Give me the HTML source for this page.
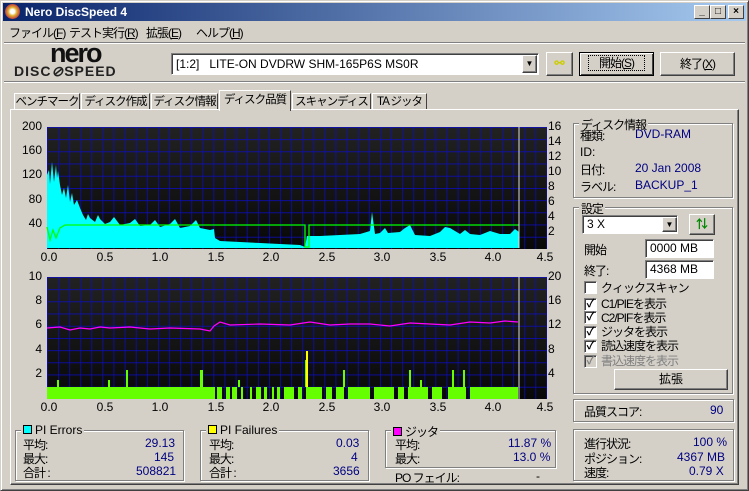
<!DOCTYPE html>
<html><head><meta charset="utf-8"><style>
*{box-sizing:border-box;margin:0;padding:0}
body{width:749px;height:491px;background:#d4d0c8;font-family:"Liberation Sans","Noto Sans CJK JP",sans-serif;font-size:12px;color:#000;position:relative;overflow:hidden}
.a{position:absolute;white-space:nowrap}
.n{letter-spacing:-1px}
.win{position:absolute;left:0;top:0;width:749px;height:491px;border:1px solid;border-color:#d4d0c8 #404040 #404040 #d4d0c8;box-shadow:inset 1px 1px #fff,inset -1px -1px #808080}
.title{position:absolute;left:3px;top:3px;width:743px;height:18px;background:linear-gradient(90deg,#0a246a,#a6caf0);color:#fff;font-weight:bold;font-size:12px;line-height:18px;padding-left:22px}
.tb{position:absolute;top:5px;width:16px;height:14px;background:#d4d0c8;border:1px solid;border-color:#fff #404040 #404040 #fff;font-size:10px;line-height:11px;text-align:center;color:#000;font-weight:bold}
.grp{position:absolute;border:1px solid #808080;box-shadow:1px 1px #fff, inset 1px 1px #fff}
.gl{position:absolute;top:-8px;left:6px;background:#d4d0c8;padding:0 2px;letter-spacing:-1px}
.v{color:#000080}
.btn{position:absolute;background:#d4d0c8;border:1px solid;border-color:#fff #404040 #404040 #fff;box-shadow:inset -1px -1px #808080;text-align:center}
.edit{position:absolute;background:#fff;border:1px solid;border-color:#808080 #fff #fff #808080;box-shadow:inset 1px 1px #404040;padding-left:4px;line-height:16px}
.cb{position:absolute;width:13px;height:13px;background:#fff;border:1px solid;border-color:#808080 #fff #fff #808080;box-shadow:inset 1px 1px #404040;font-size:11px;line-height:11px;text-align:center;font-weight:bold}
.tab{position:absolute;top:93px;height:17px;border:1px solid;border-color:#fff #404040 transparent #fff;border-bottom:none;line-height:16px;text-align:center;font-size:11.5px;letter-spacing:-1px;overflow:hidden}
</style></head><body>
<div class="win"></div>
<div class="title">Nero DiscSpeed 4</div>
<div class="a" style="left:5px;top:4px;width:15px;height:15px;border-radius:50%;background:radial-gradient(circle,#fff 20%,#e0b030 40%,#c04040 70%,#6080c0)"></div>
<div class="tb" style="left:694px">_</div><div class="tb" style="left:710px">□</div><div class="tb" style="left:728px">×</div>
<div class="a n" style="left:9px;top:24px">ファイル(<u>F</u>)</div>
<div class="a n" style="left:69px;top:24px">テスト実行(<u>R</u>)</div>
<div class="a n" style="left:146px;top:24px">拡張(<u>E</u>)</div>
<div class="a n" style="left:196px;top:24px">ヘルプ(<u>H</u>)</div>
<div class="a" style="left:4px;top:42px;width:741px;border-top:1px solid #808080;border-bottom:1px solid #fff"></div>
<div class="a" style="left:4px;top:81px;width:741px;border-top:1px solid #808080;border-bottom:1px solid #fff"></div>
<div class="a" style="left:50px;top:38px;font:bold 27px 'Liberation Sans',sans-serif;letter-spacing:-2px;color:#111">nero</div>
<div class="a" style="left:14px;top:63px;font:bold 14px 'Liberation Sans',sans-serif;letter-spacing:1px;color:#222">DISC<span style="font-style:italic">⊘</span>SPEED</div>
<div class="edit" style="left:171px;top:53px;width:368px;height:22px;line-height:20px">[1:2]&nbsp;&nbsp; LITE-ON DVDRW SHM-165P6S MS0R</div>
<div class="btn" style="left:522px;top:55px;width:15px;height:18px;font-size:8px;line-height:16px">▼</div>
<div class="btn" style="left:546px;top:52px;width:27px;height:24px;color:#cc0;font-weight:bold;line-height:20px">⚯</div>
<div class="btn n" style="left:579px;top:52px;width:75px;height:24px;line-height:20px;border:1px solid #000;box-shadow:inset 1px 1px #fff,inset -1px -1px #404040"><span style="outline:1px dotted #000;padding:0 10px">開始(<u>S</u>)</span></div>
<div class="btn n" style="left:660px;top:52px;width:75px;height:24px;line-height:22px">終了(<u>X</u>)</div>
<!-- tabs -->
<div class="tab" style="left:14px;width:66px">ベンチマーク</div>
<div class="tab" style="left:81px;width:69px">ディスク作成</div>
<div class="tab" style="left:151px;width:67px">ディスク情報</div>
<div class="tab" style="left:219px;top:90px;width:72px;height:21px;background:#d4d0c8;z-index:2;line-height:19px">ディスク品質</div>
<div class="tab" style="left:292px;width:79px">スキャンディスク</div>
<div class="tab" style="left:372px;width:55px">TA ジッタ</div>
<div class="a" style="left:10px;top:109px;width:729px;height:376px;border:1px solid;border-color:#fff #404040 #404040 #fff;box-shadow:inset -1px -1px #808080"></div>
<!-- charts -->
<svg class="a" style="left:0;top:115px" width="570" height="305" viewBox="0 115 570 305" font-family="Liberation Sans,sans-serif" font-size="12">
<defs><linearGradient id="bg" x1="0" y1="0" x2="0" y2="1"><stop offset="0" stop-color="#222"/><stop offset="1" stop-color="#080808"/></linearGradient>
<pattern id="gr" x="47" y="127" width="11.1" height="12.2" patternUnits="userSpaceOnUse"><path d="M0 0V12.2M0 0H11.1" stroke="#0c0cc8" stroke-width="1.4" fill="none"/></pattern>
<pattern id="gr2" x="47" y="277" width="11.1" height="12.2" patternUnits="userSpaceOnUse"><path d="M0 0V12.2M0 0H11.1" stroke="#0c0cc8" stroke-width="1.4" fill="none"/></pattern></defs>
<rect x="47" y="127" width="500" height="122" fill="url(#bg)"/><rect x="47" y="127" width="500" height="122" fill="url(#gr)"/>
<rect x="47" y="277" width="500" height="122" fill="url(#bg)"/><rect x="47" y="277" width="500" height="122" fill="url(#gr2)"/>
<path fill="#00ffff" d="M47 248V175L49 170 50 184 52 162 54 182 56 165 57 178 58 171 60 185 62 195 64 188 66 198 68 185 70 202 72 193 74 205 77 200 80 208 83 215 86 220 88 214 90 218 95 222 98 215 100 219 105 224 110 222 114 217 120 225 130 223 135 219 140 226 150 225 155 220 160 227 170 224 175 219 180 228 190 226 196 220 200 228 210 230 214 229 215 238 220 241 240 242 260 243 280 244 300 245 305 247 307 236 320 236 340 235 360 234 370 231 372 212 375 234 380 233 385 228 388 233 400 232 405 228 410 225 415 235 430 236 440 232 445 227 450 228 460 234 465 230 470 234 480 235 490 231 500 234 510 234 515 229 519 232V248Z"/>
<path fill="none" stroke="#00ff00" stroke-width="1.3" d="M47 227L50 240 53 230 56 238 60 228 65 225H305V247H309V225H519"/>
<line x1="519" y1="127" x2="519" y2="248" stroke="#ddd"/>
<path fill="none" stroke="#ff00ff" stroke-width="1.2" d="M47 328L60 327 70 330 80 328 90 329 100 327 110 328 130 327 150 329 170 328 200 329 210 331 214 326 220 322 230 325 260 324 290 325 310 322 330 325 350 324 370 324 390 326 410 323 430 324 450 325 470 322 490 323 505 321 518 322"/>
<path fill="#66ff00" d="M47 387h168v12H47zM217 387h5v12h-5zM226 387h4v12h-4zM232 387h5v12h-5zM241 387h2v12h-2zM250 387h2v12h-2zM256 387h5v12h-5zM264 387h3v12h-3zM272 387h2v12h-2zM277 387h3v12h-3zM284 387h10v12h-10zM298 387h4v12h-4zM306 387h16v12h-16zM326 387h6v12h-6zM336 387h8v12h-8zM348 387h22v12h-22zM374 387h20v12h-20zM398 387h6v12h-6zM408 387h20v12h-20zM432 387h10v12h-10zM448 387h18v12h-18zM470 387h48v12h-48zM57 380h2v7h-2zM108 380h2v7h-2zM126 370h2v17h-2zM200 370h3v17h-3zM238 380h2v7h-2zM305 360h3v27h-3zM343 370h2v17h-2zM409 370h2v17h-2zM452 370h2v17h-2zM463 370h2v17h-2zM420 380h2v7h-2z"/>
<path fill="#ffff00" d="M306 351h2v36h-2z"/>
<line x1="519" y1="277" x2="519" y2="399" stroke="#ddd"/>
<g text-anchor="end" fill="#000"><text x="42" y="130">200</text><text x="42" y="154">160</text><text x="42" y="178">120</text><text x="42" y="203">80</text><text x="42" y="227">40</text>
<text x="42" y="280">10</text><text x="42" y="304">8</text><text x="42" y="328">6</text><text x="42" y="353">4</text><text x="42" y="377">2</text></g>
<g fill="#000"><text x="548" y="130">16</text><text x="548" y="145">14</text><text x="548" y="160">12</text><text x="548" y="175">10</text><text x="548" y="190">8</text><text x="548" y="205">6</text><text x="548" y="220">4</text><text x="548" y="235">2</text>
<text x="548" y="280">20</text><text x="548" y="304">16</text><text x="548" y="328">12</text><text x="548" y="353">8</text><text x="548" y="377">4</text></g>
<g text-anchor="middle" fill="#000"><text x="49" y="261">0.0</text><text x="105" y="261">0.5</text><text x="160" y="261">1.0</text><text x="216" y="261">1.5</text><text x="271" y="261">2.0</text><text x="327" y="261">2.5</text><text x="382" y="261">3.0</text><text x="438" y="261">3.5</text><text x="493" y="261">4.0</text><text x="545" y="261">4.5</text>
<text x="49" y="411">0.0</text><text x="105" y="411">0.5</text><text x="160" y="411">1.0</text><text x="216" y="411">1.5</text><text x="271" y="411">2.0</text><text x="327" y="411">2.5</text><text x="382" y="411">3.0</text><text x="438" y="411">3.5</text><text x="493" y="411">4.0</text><text x="545" y="411">4.5</text></g>
</svg>
<!-- right panel -->
<div class="grp" style="left:573px;top:123px;width:160px;height:75px"><span class="gl" style="left:5px">ディスク情報</span></div>
<div class="a n" style="left:580px;top:127px">種類:</div><div class="a v" style="left:635px;top:127px">DVD-RAM</div>
<div class="a" style="left:580px;top:145px">ID:</div>
<div class="a n" style="left:580px;top:161px">日付:</div><div class="a v" style="left:635px;top:161px">20 Jan 2008</div>
<div class="a n" style="left:580px;top:178px">ラベル:</div><div class="a v" style="left:635px;top:178px">BACKUP_1</div>
<div class="grp" style="left:573px;top:207px;width:160px;height:187px"><span class="gl" style="left:5px">設定</span></div>
<div class="edit" style="left:582px;top:215px;width:96px;height:19px">3 X</div>
<div class="btn" style="left:662px;top:217px;width:15px;height:15px;font-size:8px;line-height:13px">▼</div>
<div class="btn" style="left:689px;top:214px;width:26px;height:21px;color:#080;font-weight:bold;line-height:18px">⇅</div>
<div class="a n" style="left:584px;top:241px">開始</div><div class="edit" style="left:645px;top:239px;width:69px;height:19px">0000 MB</div>
<div class="a n" style="left:584px;top:262px">終了:</div><div class="edit" style="left:645px;top:260px;width:69px;height:19px">4368 MB</div>
<div class="cb" style="left:584px;top:281px"></div><div class="a n" style="left:601px;top:279px">クィックスキャン</div>
<div class="cb" style="left:584px;top:298px">✓</div><div class="a n" style="left:601px;top:295px">C1/PIEを表示</div>
<div class="cb" style="left:584px;top:311px">✓</div><div class="a n" style="left:601px;top:309px">C2/PIFを表示</div>
<div class="cb" style="left:584px;top:326px">✓</div><div class="a n" style="left:601px;top:323px">ジッタを表示</div>
<div class="cb" style="left:584px;top:340px">✓</div><div class="a n" style="left:601px;top:337px">読込速度を表示</div>
<div class="cb" style="left:584px;top:355px;background:#d4d0c8;color:#808080">✓</div><div class="a n" style="left:601px;top:352px;color:#808080">書込速度を表示</div>
<div class="btn" style="left:614px;top:369px;width:114px;height:21px;line-height:19px">拡張</div>
<div class="grp" style="left:573px;top:399px;width:161px;height:23px"></div>
<div class="a n" style="left:584px;top:403px">品質スコア:</div><div class="a v" style="left:710px;top:403px">90</div>
<div class="grp" style="left:573px;top:429px;width:161px;height:52px"></div>
<div class="a n" style="left:584px;top:435px">進行状況:</div><div class="a v" style="left:693px;top:435px">100 %</div>
<div class="a n" style="left:584px;top:450px">ポジション:</div><div class="a v" style="left:677px;top:450px">4367 MB</div>
<div class="a n" style="left:584px;top:464px">速度:</div><div class="a v" style="left:689px;top:464px">0.79 X</div>
<!-- bottom stats -->
<div class="grp" style="left:15px;top:430px;width:169px;height:51px"><span class="gl" style="left:5px;letter-spacing:0"><span style="display:inline-block;width:9px;height:9px;background:#0ff;border:1px solid #000;margin-right:3px"></span>PI Errors</span></div>
<div class="a n" style="left:23px;top:436px">平均:</div><div class="a v" style="left:145px;top:436px">29.13</div>
<div class="a n" style="left:23px;top:450px">最大:</div><div class="a v" style="left:154px;top:450px">145</div>
<div class="a n" style="left:23px;top:464px">合計 :</div><div class="a v" style="left:136px;top:464px">508821</div>
<div class="grp" style="left:200px;top:430px;width:169px;height:51px"><span class="gl" style="left:5px;letter-spacing:0"><span style="display:inline-block;width:9px;height:9px;background:#ff0;border:1px solid #000;margin-right:3px"></span>PI Failures</span></div>
<div class="a n" style="left:209px;top:436px">平均:</div><div class="a v" style="left:336px;top:436px">0.03</div>
<div class="a n" style="left:209px;top:450px">最大:</div><div class="a v" style="left:351px;top:450px">4</div>
<div class="a n" style="left:209px;top:464px">合計 :</div><div class="a v" style="left:333px;top:464px">3656</div>
<div class="grp" style="left:385px;top:430px;width:171px;height:38px"><span class="gl" style="left:5px"><span style="display:inline-block;width:9px;height:9px;background:#f0f;border:1px solid #000;margin-right:3px"></span>ジッタ</span></div>
<div class="a n" style="left:395px;top:436px">平均:</div><div class="a v" style="left:508px;top:436px">11.87 %</div>
<div class="a n" style="left:395px;top:450px">最大:</div><div class="a v" style="left:513px;top:450px">13.0 %</div>
<div class="a n" style="left:395px;top:469px">PO フェイル:</div><div class="a" style="left:536px;top:469px">-</div>
</body></html>
